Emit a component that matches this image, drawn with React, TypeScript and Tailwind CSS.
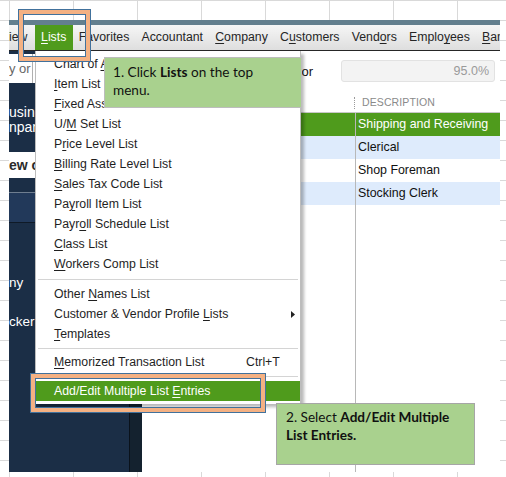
import React from "react";

type Item = { pre: string; u: string; post: string; sub?: boolean };

const group1: Item[] = [
  { pre: "Chart of ", u: "A", post: "ccounts" },
  { pre: "", u: "I", post: "tem List" },
  { pre: "", u: "F", post: "ixed Asset Item List" },
  { pre: "U/", u: "M", post: " Set List" },
  { pre: "P", u: "r", post: "ice Level List" },
  { pre: "", u: "B", post: "illing Rate Level List" },
  { pre: "", u: "S", post: "ales Tax Code List" },
  { pre: "Pa", u: "y", post: "roll Item List" },
  { pre: "Payr", u: "o", post: "ll Schedule List" },
  { pre: "", u: "C", post: "lass List" },
  { pre: "", u: "W", post: "orkers Comp List" },
];

const group2: Item[] = [
  { pre: "Other ", u: "N", post: "ames List" },
  { pre: "Customer & Vendor Profile ", u: "L", post: "ists", sub: true },
  { pre: "", u: "T", post: "emplates" },
];

function Label({ pre, u, post }: { pre: string; u: string; post: string }) {
  return (
    <span className="whitespace-nowrap">
      {pre}
      <span className="underline underline-offset-[2px] decoration-1">{u}</span>
      {post}
    </span>
  );
}

function MenuRow({ item }: { item: Item }) {
  return (
    <div className="h-[20px] flex items-center pl-[18px] pr-[5px]">
      <Label pre={item.pre} u={item.u} post={item.post} />
      {item.sub && (
        <svg className="ml-auto" width="4" height="7" viewBox="0 0 4 7">
          <path d="M0 0L4 3.5L0 7Z" fill="#222" />
        </svg>
      )}
    </div>
  );
}

function Sep({ h }: { h: string }) {
  return (
    <div className={`${h} flex items-center px-[2px]`}>
      <div className="h-px w-full bg-[#d4d4d4]" />
    </div>
  );
}

function Frame({ cls }: { cls: string }) {
  return (
    <div className={`absolute ${cls} border border-[#41719c]`}>
      <div className="w-full h-full border-[4px] border-[#f4b183]">
        <div className="w-full h-full border border-[#41719c]" />
      </div>
    </div>
  );
}

const topItems: { pre: string; u: string; post: string }[] = [
  { pre: "Favorites", u: "", post: "" },
  { pre: "Accountant", u: "", post: "" },
  { pre: "", u: "C", post: "ompany" },
  { pre: "C", u: "u", post: "stomers" },
  { pre: "Vend", u: "o", post: "rs" },
  { pre: "Emplo", u: "y", post: "ees" },
  { pre: "", u: "B", post: "anking" },
];

const rows = [
  { text: "Shipping and Receiving", bg: "bg-[#4f9b1c]", fg: "text-white" },
  { text: "Clerical", bg: "bg-[#deebfc]", fg: "text-[#111]" },
  { text: "Shop Foreman", bg: "bg-white", fg: "text-[#111]" },
  { text: "Stocking Clerk", bg: "bg-[#deebfc]", fg: "text-[#111]" },
];

export default function App() {
  return (
    <div className="relative w-[506px] h-[477px] overflow-hidden bg-white bg-[linear-gradient(to_right,#d9d9d9_1px,transparent_1px),linear-gradient(to_bottom,#d9d9d9_1px,transparent_1px)] bg-[size:64px_20px] bg-[position:9px_0px] pt-[20px] pl-[9px] font-['Liberation_Sans',Arial,sans-serif] text-[12.3px]">
      {/* Embedded application screenshot */}
      <div className="w-[491px] h-[452px] overflow-hidden flex flex-col bg-white">
        <div className="h-[5px] bg-[#637f8e]" />
        {/* Menu bar */}
        <div className="h-[26px] flex items-stretch border-b border-[#262626] bg-gradient-to-b from-[#f6f6f6] to-[#dedede] text-[#262626] whitespace-nowrap">
          <span className="-ml-[8px] mr-[7.3px] flex items-center">View</span>
          <span className="px-[6.3px] flex items-center bg-[#4f9b1c] text-white">
            <Label pre="" u="L" post="ists" />
          </span>
          {topItems.map((t, i) => (
            <span key={i} className="px-[6.1px] flex items-center">
              {t.u ? <Label pre={t.pre} u={t.u} post={t.post} /> : t.pre}
            </span>
          ))}
        </div>
        {/* Body */}
        <div className="flex-1 flex">
          {/* Left navigation panel */}
          <div className="w-[133px] flex bg-[#1b2e46]">
            <div className="w-[120px] flex flex-col">
              <div className="h-[3px]" />
              <div className="h-[29px] bg-white flex items-center text-[13px] text-[#666]">
                <div className="w-[24px] h-full border-r border-[#b0b0b0] flex items-center whitespace-nowrap">y or</div>
              </div>
              <div className="h-[69px] pt-[22px] text-white text-[14px] leading-[15px]">
                <div>using</div>
                <div>npany</div>
              </div>
              <div className="h-[26px] bg-white flex items-center font-bold text-[14px] text-[#2b2b2b] whitespace-nowrap">ew c</div>
              <div className="h-[14px]" />
              <div className="h-[31px] border-t border-[#6f7e90] border-b border-b-[#0f1a27] bg-[#22395a]" />
              <div className="flex-1 pt-[52px] text-white text-[13.5px] leading-[16px]">
                <div>ny</div>
                <div className="mt-[23px]">cker</div>
              </div>
            </div>
            <div className="w-[13px] bg-[#14222f] border-l border-[#0a121b]" />
          </div>
          {/* Right content */}
          <div className="flex-1 flex flex-col bg-white">
            <div className="h-[42px] flex justify-end items-start pt-[9px] pr-[5px]">
              <span className="leading-[22px] mt-[1px] text-[13px] text-[#111]">Indicator</span>
              <div className="ml-[28px] w-[154px] h-[22px] rounded-[3px] bg-[#f3f3f3] border border-[#e2e2e2] flex items-center justify-end pr-[5px] text-[12.5px] text-[#9a9a9a]">95.0%</div>
            </div>
            <div className="h-[19px] flex items-center">
              <div className="w-[212px]" />
              <div className="h-[12px] border-l border-dotted border-[#9a9a9a]" />
              <span className="pl-[7px] text-[10.5px] text-[#8a8a8a] tracking-[0.1px]">DESCRIPTION</span>
            </div>
            <div className="flex-1 flex flex-col border-t border-[#c8c8c8]">
              {rows.map((r, i) => (
                <div key={i} className={`h-[23px] flex ${r.bg} ${r.fg}`}>
                  <div className="w-[213px]" />
                  <div className="flex-1 border-l border-[#b8b8b8] pl-[2px] flex items-center text-[12.4px]">{r.text}</div>
                </div>
              ))}
              <div className="flex-1 flex">
                <div className="w-[213px]" />
                <div className="flex-1 border-l border-[#b8b8b8]" />
              </div>
            </div>
          </div>
        </div>
      </div>

      {/* Lists dropdown menu */}
      <div className="absolute left-[35px] top-[51px] w-[266px] h-[353px] bg-white border-l border-r border-[#bdbdbd] shadow-[3px_3px_3px_rgba(0,0,0,0.28)] pt-[3px] text-[#1f1f1f]">
        {group1.map((it, i) => (
          <MenuRow key={i} item={it} />
        ))}
        <Sep h="h-[10px]" />
        {group2.map((it, i) => (
          <MenuRow key={i} item={it} />
        ))}
        <Sep h="h-[8px]" />
        <div className="h-[20px] flex items-center pl-[18px]">
          <span className="w-[192px]">
            <Label pre="" u="M" post="emorized Transaction List" />
          </span>
          <span>Ctrl+T</span>
        </div>
        <Sep h="h-[9px]" />
        <div className="h-[20px] flex items-center pl-[18px] bg-[#4f9b1c] text-white">
          <Label pre="Add/Edit Multiple List " u="E" post="ntries" />
        </div>
      </div>

      {/* Callout 1 */}
      <div className="absolute left-[104px] top-[57px] w-[198px] h-[51px] bg-[#a9d18e] border border-[#bdbdbd] pl-[8px] pr-[14px] pt-[5px] font-['Lato',sans-serif] text-[13.6px] leading-[18px] text-[#111]">
        1. Click <b>Lists</b> on the top menu.
      </div>

      {/* Callout 2 */}
      <div className="absolute left-[276px] top-[403px] w-[199px] h-[62px] bg-[#a9d18e] border border-[#a6a6a6] pl-[9px] pr-[8px] pt-[4px] font-['Lato',sans-serif] text-[13.6px] leading-[18px] text-[#111]">
        2. Select <b>Add/Edit Multiple List Entries.</b>
      </div>

      <Frame cls="left-[18px] top-[9px] w-[73px] h-[53px]" />
      <Frame cls="left-[30px] top-[373px] w-[236px] h-[40px]" />
    </div>
  );
}
